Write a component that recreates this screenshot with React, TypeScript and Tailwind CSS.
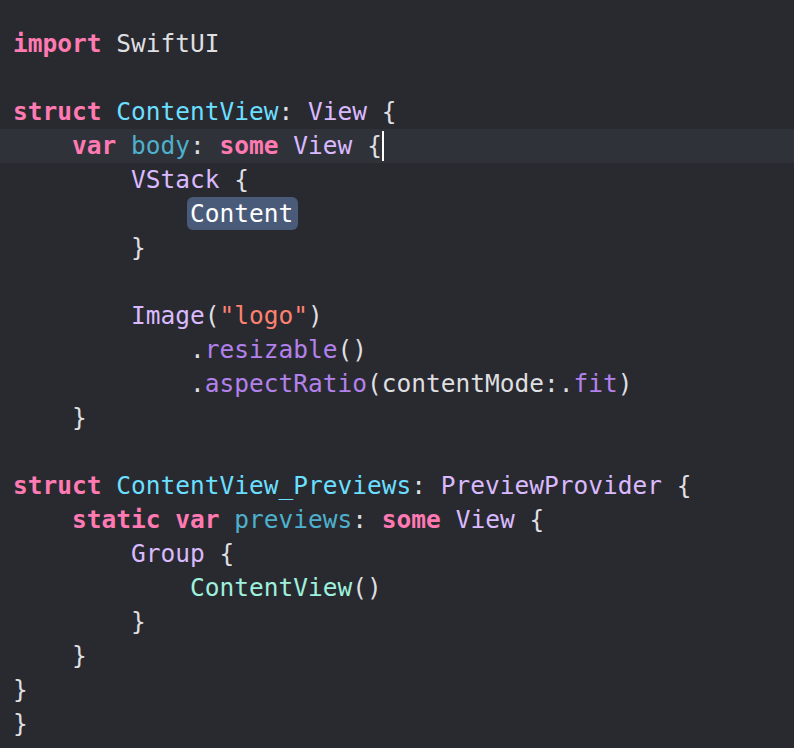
import React from "react";

type Tok = [string, string?];

const K = "text-[#FF7AB2] font-bold";
const TD = "text-[#6BDFFF]";
const OD = "text-[#4EB0CC]";
const OT = "text-[#DABAFF]";
const FN = "text-[#B281EB]";
const ST = "text-[#FF8170]";
const PC = "text-[#9EF1DD]";
const P = "text-[#DFDFE0]";

const lines: (Tok[] | "content" | "cursor")[] = [
  [["import", K], [" SwiftUI", P]],
  [],
  [["struct", K], [" "], ["ContentView", TD], [": ", P], ["View", OT], [" {", P]],
  "cursor",
  [["        "], ["VStack", OT], [" {", P]],
  "content",
  [["        }", P]],
  [],
  [["        "], ["Image", OT], ["(", P], ['"logo"', ST], [")", P]],
  [["            .", P], ["resizable", FN], ["()", P]],
  [["            .", P], ["aspectRatio", FN], ["(contentMode:.", P], ["fit", FN], [")", P]],
  [["    }", P]],
  [],
  [["struct", K], [" "], ["ContentView_Previews", TD], [": ", P], ["PreviewProvider", OT], [" {", P]],
  [["    "], ["static", K], [" "], ["var", K], [" "], ["previews", OD], [": ", P], ["some", K], [" "], ["View", OT], [" {", P]],
  [["        "], ["Group", OT], [" {", P]],
  [["            "], ["ContentView", PC], ["()", P]],
  [["        }", P]],
  [["    }", P]],
  [["}", P]],
  [["}", P]],
];

function renderToks(toks: Tok[]) {
  return toks.map((t, i) => (
    <span key={i} className={t[1] ?? P}>
      {t[0]}
    </span>
  ));
}

export default function App() {
  return (
    <div
      className="w-[794px] h-[748px] bg-[#292A30] overflow-hidden pt-[27px] text-[24.5px] leading-[34px] text-[#DFDFE0]"
      style={{ fontFamily: '"DejaVu Sans Mono", "Liberation Mono", monospace' }}
    >
      {lines.map((ln, i) => {
        if (ln === "cursor") {
          return (
            <div key={i} className="h-[34px] pl-[13px] whitespace-pre flex items-center bg-[#2F3239]">
              {renderToks([["    "], ["var", K], [" "], ["body", OD], [": ", P], ["some", K], [" "], ["View", OT], [" {", P]])}
              <span className="inline-block w-[2px] h-[30px] bg-white" />
            </div>
          );
        }
        if (ln === "content") {
          return (
            <div key={i} className="h-[34px] pl-[13px] whitespace-pre flex items-center">
              <span>{"            "}</span>
              <span className="relative text-white">
                <span className="absolute -left-[3px] -right-[5px] top-[0px] bottom-[1px] rounded-[6px] bg-[#4A5B79]" />
                <span className="relative">Content</span>
              </span>
            </div>
          );
        }
        return (
          <div key={i} className="h-[34px] pl-[13px] whitespace-pre flex items-center">
            {renderToks(ln)}
          </div>
        );
      })}
    </div>
  );
}
